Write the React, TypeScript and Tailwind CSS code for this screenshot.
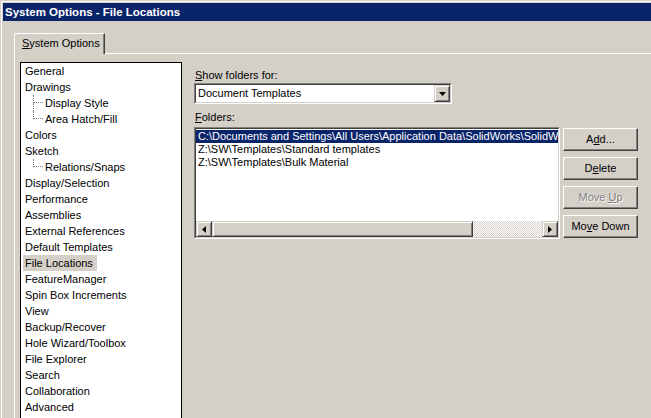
import React from "react";

// classic 3D borders
const raised =
  "border border-t-white border-l-white border-r-[#404040] border-b-[#404040] shadow-[inset_-1px_-1px_0_#808080,inset_1px_1px_0_#d4d0c8]";
const raisedSmall =
  "border border-t-[#d4d0c8] border-l-[#d4d0c8] border-r-[#404040] border-b-[#404040] shadow-[inset_1px_1px_0_#ffffff,inset_-1px_-1px_0_#808080]";

type TreeItem = {
  label: string;
  child?: boolean;
  more?: boolean;
  selected?: boolean;
};

const tree: TreeItem[] = [
  { label: "General" },
  { label: "Drawings" },
  { label: "Display Style", child: true, more: true },
  { label: "Area Hatch/Fill", child: true },
  { label: "Colors" },
  { label: "Sketch" },
  { label: "Relations/Snaps", child: true },
  { label: "Display/Selection" },
  { label: "Performance" },
  { label: "Assemblies" },
  { label: "External References" },
  { label: "Default Templates" },
  { label: "File Locations", selected: true },
  { label: "FeatureManager" },
  { label: "Spin Box Increments" },
  { label: "View" },
  { label: "Backup/Recover" },
  { label: "Hole Wizard/Toolbox" },
  { label: "File Explorer" },
  { label: "Search" },
  { label: "Collaboration" },
  { label: "Advanced" },
];

const folders = [
  "C:\\Documents and Settings\\All Users\\Application Data\\SolidWorks\\SolidWorks 2008\\templates",
  "Z:\\SW\\Templates\\Standard templates",
  "Z:\\SW\\Templates\\Bulk Material",
];

function Sunken({
  className,
  children,
}: {
  className?: string;
  children: React.ReactNode;
}) {
  return (
    <div
      className={
        "border border-t-[#808080] border-l-[#808080] border-r-white border-b-white " +
        (className ?? "")
      }
    >
      <div className="h-full border border-t-[#404040] border-l-[#404040] border-r-[#d4d0c8] border-b-[#d4d0c8] bg-white">
        {children}
      </div>
    </div>
  );
}

function Arrow({ dir }: { dir: "left" | "right" | "down" }) {
  if (dir === "down")
    return (
      <svg width="7" height="4" viewBox="0 0 7 4">
        <polygon points="0,0 7,0 3.5,4" fill="#000" />
      </svg>
    );
  return (
    <svg width="4" height="7" viewBox="0 0 4 7">
      {dir === "left" ? (
        <polygon points="4,0 4,7 0,3.5" fill="#000" />
      ) : (
        <polygon points="0,0 0,7 4,3.5" fill="#000" />
      )}
    </svg>
  );
}

function PushButton({
  children,
  disabled,
}: {
  children: React.ReactNode;
  disabled?: boolean;
}) {
  return (
    <div
      className={
        "w-[75px] h-[23px] flex items-center justify-center " +
        raised +
        (disabled
          ? " text-[#808080] [text-shadow:1px_1px_0_#ffffff]"
          : "")
      }
    >
      <span className="whitespace-nowrap">{children}</span>
    </div>
  );
}

export default function App() {
  return (
    <div className="w-[651px] h-[418px] overflow-hidden bg-[#d4d0c8] pl-px pt-px font-['Liberation_Sans',Arial,sans-serif] text-[11px] leading-[13px] text-black">
      <div className="h-full border-l border-t border-white pl-px pt-px flex flex-col">
        {/* TITLE BAR */}
        <div className="h-[18px] shrink-0 bg-[#0a246a] text-white font-bold text-[11.5px] leading-[18px] pl-[2px] whitespace-nowrap">
          System Options - File Locations
        </div>

        <div className="ml-[11px] mt-[12px] flex flex-col flex-1 min-h-0">
          {/* TAB STRIP */}
          <div className="flex items-end shrink-0">
            <div className="w-[91px] h-[21px] border-l border-t border-r border-t-white border-l-white border-r-[#404040] rounded-tl-[2px] shadow-[inset_-1px_0_0_#808080] pl-[7px] leading-[19px] whitespace-nowrap">
              <span className="underline">S</span>ystem Options
            </div>
            <div className="flex-1 border-b border-white" />
          </div>

          {/* PANEL */}
          <div className="flex-1 border-l border-white pl-[5px] pt-[8px] flex min-h-0">
            {/* TREE */}
            <div className="w-[162px] h-[400px] shrink-0 bg-white border-l border-t border-r border-black">
              {tree.map((item) => (
                <div
                  key={item.label}
                  className="h-[16px] flex items-center pl-[2px] whitespace-nowrap"
                >
                  {item.child && (
                    <>
                      <div className="w-[10px]" />
                      <div className="w-[10px] h-full flex flex-col">
                        <div className="h-[8px] border-l border-b border-dotted border-[#808080]" />
                        {item.more && (
                          <div className="flex-1 border-l border-dotted border-[#808080]" />
                        )}
                      </div>
                    </>
                  )}
                  <span
                    className={
                      "pl-[2px] h-[16px] leading-[16px] " +
                      (item.selected ? "bg-[#d4d0c8] pr-[4px]" : "pr-[2px]")
                    }
                  >
                    {item.label}
                  </span>
                </div>
              ))}
            </div>

            {/* RIGHT SIDE */}
            <div className="ml-[12px] flex flex-col">
              <div className="mt-[7px] pl-px">
                <span className="underline">S</span>how folders for:
              </div>

              <Sunken className="mt-px w-[258px] h-[21px]">
                <div className="h-full flex items-center">
                  <div className="flex-1 pl-[2px]">Document Templates</div>
                  <div
                    className={
                      "w-[16px] h-full flex items-center justify-center bg-[#d4d0c8] " +
                      raisedSmall
                    }
                  >
                    <Arrow dir="down" />
                  </div>
                </div>
              </Sunken>

              <div className="mt-[7px] pl-px">
                <span className="underline">F</span>olders:
              </div>

              <div className="mt-[3px] flex items-start gap-[3px]">
                <Sunken className="w-[366px] h-[112px]">
                  <div className="h-full flex flex-col">
                    <div className="flex-1 pt-px overflow-hidden">
                      {folders.map((f, i) => (
                        <div
                          key={f}
                          className={
                            "h-[13px] pl-[2px] whitespace-nowrap overflow-hidden " +
                            (i === 0 ? "bg-[#0a246a] text-white" : "")
                          }
                        >
                          {f}
                        </div>
                      ))}
                    </div>

                    {/* SCROLLBAR */}
                    <div className="h-[16px] flex bg-[#d4d0c8]">
                      <div
                        className={
                          "w-[16px] h-full flex items-center justify-center " +
                          raisedSmall
                        }
                      >
                        <Arrow dir="left" />
                      </div>
                      <div className={"w-[261px] h-full " + raisedSmall} />
                      <div className="flex-1 bg-[image:repeating-conic-gradient(#ffffff_0%_25%,#d4d0c8_0%_50%)] bg-[length:2px_2px]" />
                      <div
                        className={
                          "w-[16px] h-full flex items-center justify-center " +
                          raisedSmall
                        }
                      >
                        <Arrow dir="right" />
                      </div>
                    </div>
                  </div>
                </Sunken>

                {/* BUTTONS */}
                <div className="mt-px flex flex-col gap-[6px]">
                  <PushButton>
                    A<span className="underline">d</span>d...
                  </PushButton>
                  <PushButton>
                    D<span className="underline">e</span>lete
                  </PushButton>
                  <PushButton disabled>
                    Move <span className="underline">U</span>p
                  </PushButton>
                  <PushButton>
                    Mo<span className="underline">v</span>e Down
                  </PushButton>
                </div>
              </div>
            </div>
          </div>
        </div>
      </div>
    </div>
  );
}
